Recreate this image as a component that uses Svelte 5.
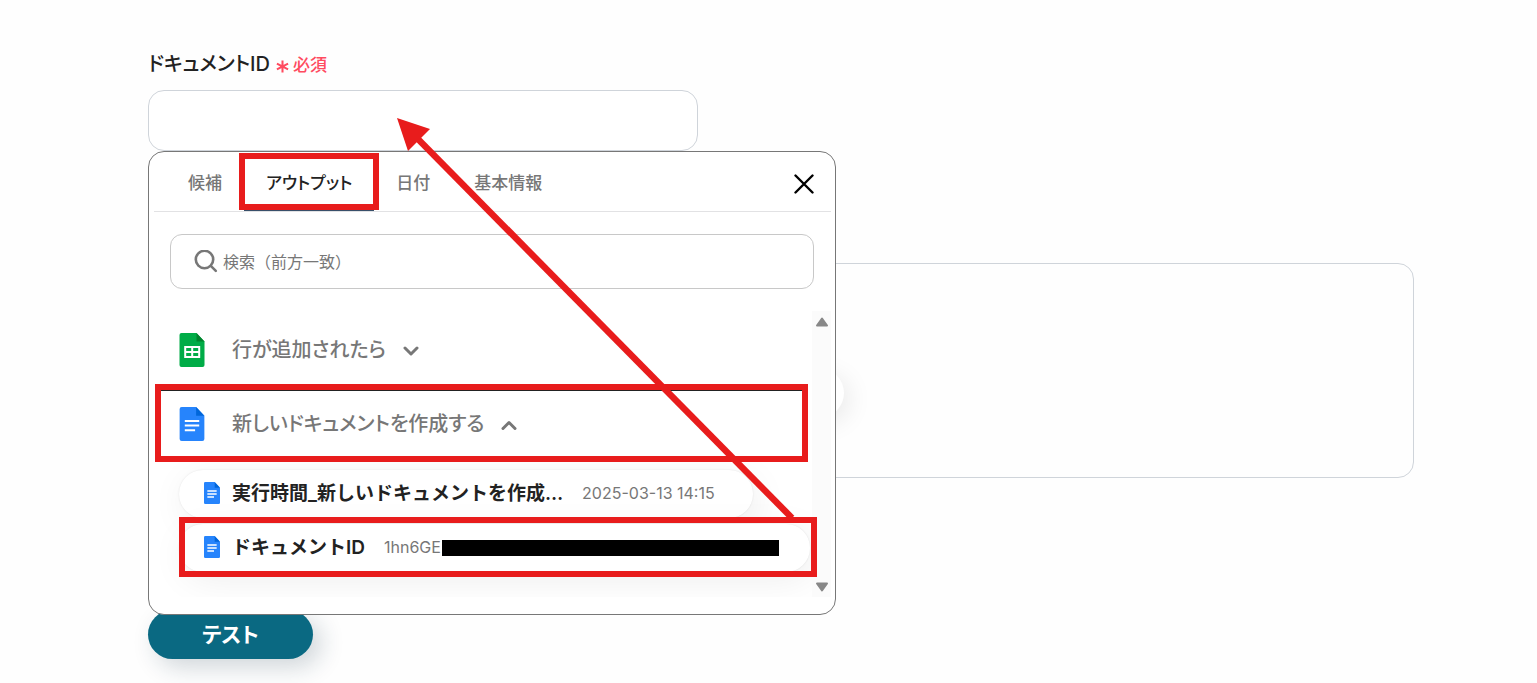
<script>
  const tabs = ['候補', 'アウトプット', '日付', '基本情報'];
  let active = $state('アウトプット');
  let documentId = $state('');
  let query = $state('');
</script>

{#snippet docIcon()}
  <svg class="file" viewBox="0 0 24 33" aria-hidden="true">
    <path d="M2 0H16L24 8.5V31a2 2 0 0 1-2 2H2a2 2 0 0 1-2-2V2a2 2 0 0 1 2-2Z" fill="#2684fc" />
    <path d="M16 0L24 8.5H16Z" fill="#0066da" />
    <path d="M5 13.5H19M5 18H19M5 22.5H15" stroke="#fff" stroke-width="2" />
  </svg>
{/snippet}

<main>
  <div class="field">
    <label for="document-id">ドキュメントID</label>
    <span class="required">
      <svg viewBox="0 0 14 14" aria-hidden="true"><path d="M7 0.5V13.5M1 3.8L13 10.2M13 3.8L1 10.2" /></svg>必須
    </span>
  </div>
  <input id="document-id" class="document" type="text" bind:value={documentId} />

  <div class="result"><span class="bubble"></span></div>
  <button class="test" type="button">テスト</button>

  <section class="picker">
    <div class="tabs">
      {#each tabs as tab}
        <button type="button" class="tab" class:active={tab === active} onclick={() => (active = tab)}>{tab}</button>
      {/each}
      <button type="button" class="close" aria-label="閉じる">
        <svg viewBox="0 0 20 20" aria-hidden="true"><path d="M1.5 1.5L18.5 18.5M18.5 1.5L1.5 18.5" /></svg>
      </button>
    </div>

    <div class="search">
      <svg viewBox="0 0 24 24" aria-hidden="true"><circle cx="10.5" cy="9.5" r="8.7" /><path d="M16.8 15.8L21.8 20.8" /></svg>
      <input type="text" aria-label="検索" placeholder="検索（前方一致）" bind:value={query} />
    </div>

    <div class="body">
      <div class="list">
        <button type="button" class="group">
          <svg class="file" viewBox="0 0 25 34" aria-hidden="true">
            <path d="M2 0H17L25 8.5V32a2 2 0 0 1-2 2H2a2 2 0 0 1-2-2V2a2 2 0 0 1 2-2Z" fill="#00ac47" />
            <path d="M17 0L25 8.5H17Z" fill="#00832d" />
            <path d="M5.7 14H19.7V24H5.7ZM5.7 19H19.7M12.7 14V24" fill="none" stroke="#fff" stroke-width="2" />
          </svg>
          <span>行が追加されたら</span>
          <svg class="chevron" viewBox="0 0 16 10" aria-hidden="true"><path d="M2 2L8 8L14 2" /></svg>
        </button>
        <button type="button" class="group open">
          {@render docIcon()}
          <span>新しいドキュメントを作成する</span>
          <svg class="chevron" viewBox="0 0 16 10" aria-hidden="true"><path d="M2 8.5L8 2.5L14 8.5" /></svg>
        </button>
        <div class="outputs">
          <button type="button" class="chip">
            {@render docIcon()}
            <strong>実行時間_新しいドキュメントを作成…</strong>
            <span class="value">2025-03-13 14:15</span>
          </button>
          <button type="button" class="chip id">
            {@render docIcon()}
            <strong>ドキュメントID</strong>
            <span class="value">1hn6GE<i class="redacted"></i></span>
          </button>
        </div>
      </div>
      <div class="scrollbar" aria-hidden="true">
        <svg viewBox="0 0 14 10"><path d="M7 1.5L12 8.5H2Z" /></svg>
        <svg viewBox="0 0 14 10"><path d="M2 1.5H12L7 8.5Z" /></svg>
      </div>
    </div>
  </section>

  <svg class="annotations" viewBox="0 0 840 683" aria-hidden="true">
    <g fill="none" stroke="#e81c1c">
      <rect x="242" y="156" width="134" height="51" stroke-width="6" />
      <rect x="158" y="387" width="647" height="72" stroke-width="6" />
      <rect x="182" y="520" width="632" height="54" stroke-width="6" />
      <path d="M414 135L792 518" stroke-width="6.5" />
    </g>
    <path d="M397 118L430 129L408 151Z" fill="#e81c1c" />
  </svg>
</main>

<style>
  :global(body) { background: #fefefe; }
  main {
    position: relative;
    box-sizing: border-box;
    padding: 52px 123px 24px 148px;
    overflow: hidden;
    font-family: Inter, "Noto Sans CJK JP", sans-serif;
    font-feature-settings: "palt";
    color: #222;
  }
  button, input { font: inherit; font-feature-settings: inherit; color: inherit; box-sizing: border-box; margin: 0; }
  button { border: 0; background: none; padding: 0; cursor: pointer; }
  svg { display: block; flex: none; }

  .field { display: flex; align-items: center; gap: 6px; height: 24px; margin-bottom: 14px; }
  label { font-size: 20px; font-weight: 500; line-height: 24px; }
  .required { display: flex; align-items: center; gap: 4px; font-size: 17px; font-weight: 500; line-height: 24px; color: #ff4b5f; padding-top: 2px; }
  .required svg { width: 13px; height: 13px; margin-top: 2px; fill: none; stroke: #ff4b5f; stroke-width: 2.2; }
  .document { display: block; width: 100%; max-width: 550px; height: 61px; padding: 0 20px; border: 1px solid #cfd4da; border-radius: 16px; background: #fff; font-size: 18px; outline: 0; }
  .result { position: relative; height: 213px; margin-top: 112px; border: 1px solid #cfd4da; border-radius: 16px; }
  .bubble { position: absolute; left: 645px; top: 104px; width: 50px; height: 50px; border-radius: 25px; background: #fff; box-shadow: 6px 6px 24px rgba(0, 0, 0, 0.08); }
  .test { display: block; width: 165px; height: 49px; margin-top: 132px; border-radius: 25px; background: #0a6982; color: #fff; font-size: 21px; font-weight: 700; line-height: 46px; box-shadow: 8px 8px 24px rgba(20, 50, 70, 0.2); }

  .picker { position: absolute; left: 148px; top: 151px; width: 688px; box-sizing: border-box; padding: 0 4px 17px 5px; border: 1px solid #777; border-radius: 16px; background: #fff; }
  .tabs { display: flex; align-items: stretch; height: 59px; padding: 0 17px 0 12px; border-bottom: 1px solid #e2e2e4; }
  .tab { padding: 2px 22px 0; font-size: 17px; font-weight: 500; color: #777; border-bottom: 2px solid transparent; }
  .tab.active { color: #222; border-color: #38506a; }
  .close { margin-left: auto; padding-top: 4px; }
  .close svg { width: 20px; height: 20px; fill: none; stroke: #000; stroke-width: 2.4; stroke-linecap: round; }
  .search { display: flex; align-items: center; gap: 5px; height: 53px; margin: 22px 17px 0 16px; padding: 0 23px; border: 1px solid #c8c8c8; border-radius: 12px; }
  .search svg { width: 24px; height: 24px; fill: none; stroke: #777; stroke-width: 2.6; stroke-linecap: round; }
  .search input { flex: 1; min-width: 0; border: 0; padding: 0; background: none; font-size: 16px; outline: 0; font-feature-settings: normal; }
  .search input::placeholder { color: #777; opacity: 1; }
  .body { display: flex; height: 286px; margin-top: 22px; }
  .list { flex: 1; min-width: 0; box-sizing: border-box; padding: 0 0 0 5px; overflow: hidden; }
  .group { display: flex; align-items: center; width: calc(100% - 6px); height: 79px; padding: 0 20px 1px; font-size: 20px; font-weight: 500; line-height: 24px; color: #777; }
  .group.open { height: 72px; padding-bottom: 5px; border-top: 1px solid #222; }
  .group .file { width: 26px; height: 34px; margin-right: 27px; }
  .chevron { width: 16px; height: 10px; margin: 2px 0 0 17px; fill: none; stroke: #777; stroke-width: 3; stroke-linecap: round; stroke-linejoin: round; }
  .outputs { display: flex; flex-direction: column; align-items: flex-start; gap: 6px; padding: 8px 0 0 20px; }
  .chip { display: flex; align-items: center; height: 48px; padding: 0 38px 0 25px; border-radius: 24px; background: #fff; box-shadow: 0 0 2px rgba(0, 0, 0, 0.1), 4px 8px 36px rgba(0, 0, 0, 0.07); white-space: nowrap; }
  .chip.id { padding-right: 31px; }
  .chip .file { width: 16px; height: 22px; margin: 0 12px 2px 0; }
  .chip strong { font-size: 19px; font-weight: 600; line-height: 24px; font-feature-settings: normal; }
  .value { display: flex; align-items: center; margin: 0 0 2px 19px; font-size: 16px; color: #777; font-feature-settings: normal; }
  .redacted { width: 337px; height: 16px; margin: 2px 0 0 1px; background: #000; }
  .scrollbar { display: flex; flex-direction: column; justify-content: space-between; align-items: center; width: 19px; padding: 6px 0 5px; box-sizing: border-box; background: #fbfbfb; }
  .scrollbar svg { width: 14px; height: 10px; fill: #888; stroke: #888; stroke-width: 2; stroke-linejoin: round; }
  .annotations { position: absolute; left: 0; top: 0; width: 840px; height: 683px; pointer-events: none; }
</style>
